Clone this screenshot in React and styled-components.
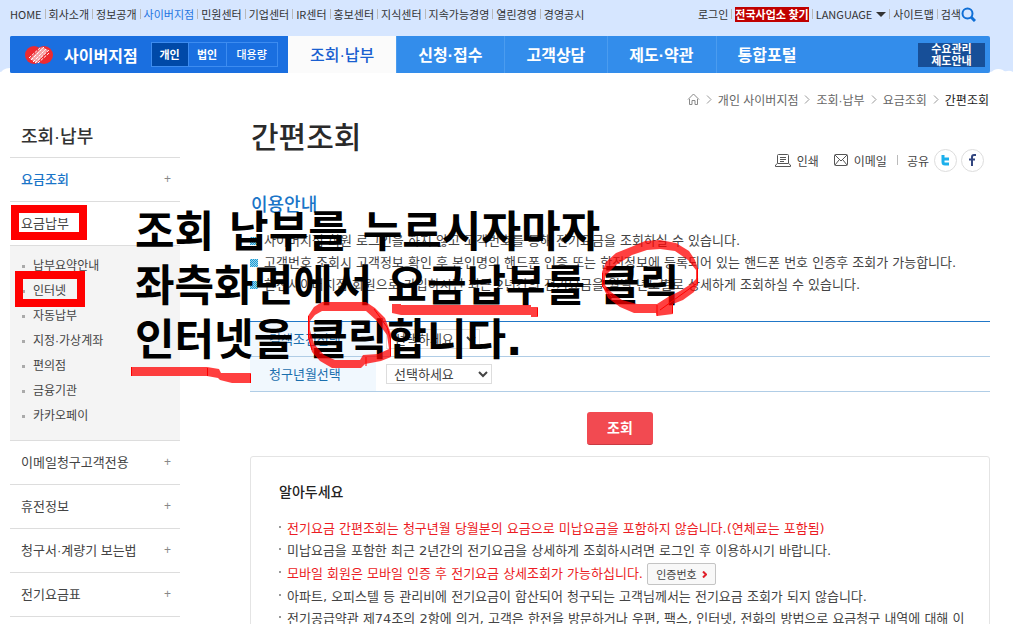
import { Fragment } from "react"
import styled, { createGlobalStyle } from "styled-components"

const topLinks = ["HOME", "회사소개", "정보공개", "사이버지점", "민원센터", "기업센터", "IR센터", "홍보센터", "지식센터", "지속가능경영", "열린경영", "경영공시"]
const menus = ["조회·납부", "신청·접수", "고객상담", "제도·약관", "통합포털"]
const payMenus = ["납부요약안내", "인터넷", "자동납부", "지정·가상계좌", "편의점", "금융기관", "카카오페이"]
const sideMenus = ["이메일청구고객전용", "휴전정보", "청구서·계량기 보는법", "전기요금표"]
const guides = [
    "사이버지점 회원 로그인을 하지 않고 고객번호를 통해 전기요금을 조회하실 수 있습니다.",
    "고객번호 조회시 고객정보 확인 후 본인명의 핸드폰 인증 또는 한전정보에 등록되어 있는 핸드폰 번호 인증후 조회가 가능합니다.",
    "한전사이버지점 회원으로 가입하시면 최근 2년간의 전기요금을 월별 년도별로 상세하게 조회하실 수 있습니다.",
]

const Logo = () => (
    <svg width="28" height="20" viewBox="0 0 28 20" aria-hidden="true">
        <ellipse cx="9" cy="10" rx="9" ry="9" fill="#ee2a30" />
        <ellipse cx="19" cy="10" rx="9" ry="9" fill="#ee2a30" />
        <path d="M5 14L17 2 23 5 12 18z" fill="#f7a3a6" />
        <g stroke="#fff" strokeWidth="1" strokeDasharray="3 1">
            <path d="M4 13L16 2M6 15L19 2M8 17L21 4M10 18L24 5M13 18L24 8" />
        </g>
    </svg>
)

const SearchIcon = () => (
    <svg width="15" height="15" viewBox="0 0 15 15" fill="none" stroke="#0f6fd6" aria-hidden="true">
        <circle cx="6.500" cy="6.500" r="5" strokeWidth="2" />
        <path d="M10 10l4 4" strokeWidth="3" />
    </svg>
)

const HomeIcon = () => (
    <svg width="13" height="12" viewBox="0 0 13 12" fill="none" stroke="#888" aria-hidden="true">
        <path d="M1 6.500L6.500 1 12 6.500M2.500 6v5.500h2.500V7.500h3v4h2.500V6" />
    </svg>
)

const Arrow = () => (
    <svg width="6" height="9" viewBox="0 0 6 9" fill="none" stroke="#999" aria-hidden="true">
        <path d="M1 0.500l4 4-4 4" />
    </svg>
)

const PrintIcon = () => (
    <svg width="16" height="13" viewBox="0 0 16 13" fill="none" stroke="#555" aria-hidden="true">
        <path d="M2.500 9V1.500Q2.500 0.500 3.500 0.500h9Q13.500 0.500 13.500 1.500V9M5 3.500h6M5 5.500h6M5 7.500h4M2.500 9.500L0.500 11v1.500h15V11L13.500 9.500z" />
    </svg>
)

const MailIcon = () => (
    <svg width="14" height="12" viewBox="0 0 14 12" fill="none" stroke="#555" aria-hidden="true">
        <rect x="0.500" y="0.500" width="13" height="11" rx="1" />
        <path d="M1 1l6 6 6-6M1 11l4-5M13 11L9 6" />
    </svg>
)

const Marks = () => (
    <MarkSvg width="720" height="400" viewBox="0 0 720 400" aria-hidden="true">
        <g fill="none" stroke="#ff0000" strokeWidth="8">
            <path d="M15 209H83V236H15z" />
            <path d="M19 275H81V303H19z" />
        </g>
        <g fill="#ff0000" fillOpacity="0.75" fillRule="evenodd">
            <path d="M602 285L602 272 606 262 616 253 631 247 645 241 660 240 676 243 689 251 695 260 698 269 698 283 694 292 683 300 673 304 673 314 657 316 656 313H634L620 307 608 298zM605 285L611 292 622 300 637 304H657L668 297 680 291 691 284 696 279 696 270 688 260 675 251 660 249 647 250 632 255 616 265 605 276z" />
            <path d="M308 316L314 307 322 302H366L375 308 385 318 391 334V357L381 361 365 364 361 368H332L320 361 312 352 308 338zM310 321V330L314 344 324 355 335 360H360L363 355 378 354 389 349 387 335 376 320 366 311H322L315 315z" />
            <path d="M392 304H401V305H531V307H538V317H531V315H401L392 313z" />
            <path d="M131 367H207L219 369 221 373H251V383H232L220 380 218 378 207 376H131z" />
        </g>
        <g fill="none" stroke="#ff0000" strokeWidth="1">
            <path d="M602.500 273V287M603 287L612 297M697.500 268V284M696 284L660 310M657 305V316M672.500 304V313" />
            <path d="M308.500 316V337L312 350M374 309L387 327 390.500 339V356M366 357V366M131.500 367V376M207.500 368V376M250.500 374V383M537.500 308V316" />
        </g>
    </MarkSvg>
)

export default function App() {
    return (
        <Page>
            <GlobalStyle />
            <Header>
                <TopBar>
                    <TopList>
                        {topLinks.map((name) => (
                            <li key={name}><TopLink href="#" $on={name === "사이버지점"}>{name}</TopLink></li>
                        ))}
                    </TopList>
                    <TopList>
                        <li><TopLink href="#">로그인</TopLink></li>
                        <li><Find href="#">전국사업소 찾기</Find></li>
                        <li><TopLink href="#">LANGUAGE <Caret /></TopLink></li>
                        <li><TopLink href="#">사이트맵</TopLink></li>
                        <li><TopLink href="#">검색<SearchIcon /></TopLink></li>
                    </TopList>
                </TopBar>
                <NavBar>
                    <Brand>
                        <Logo />
                        <BrandName href="#">사이버지점</BrandName>
                        <Kinds>
                            <Kind $on>개인</Kind>
                            <Kind>법인</Kind>
                            <Kind $small>대용량</Kind>
                        </Kinds>
                    </Brand>
                    <Menus>
                        {menus.map((name, i) => (
                            <Menu key={name} href="#" $on={i === 0}>{name}</Menu>
                        ))}
                    </Menus>
                    <Demand href="#">수요관리<br />제도안내</Demand>
                </NavBar>
                <Cloud width="10" height="5" viewBox="0 0 10 5" $side="left">
                    <path d="M0 4Q2 4 3 2 6 0 10 0V5H0z" fill="#fff" />
                </Cloud>
                <Cloud width="23" height="4" viewBox="0 0 23 4" $side="right">
                    <path d="M0 3Q2 3 4 1 8-1 13 1 14 3 17 2 20 1 23 3V4H0z" fill="#fff" />
                </Cloud>
            </Header>
            <Crumbs>
                <HomeIcon />
                {["개인 사이버지점", "조회·납부", "요금조회", "간편조회"].map((name, i) => (
                    <Fragment key={name}>
                        <Arrow />
                        <Crumb href="#" $on={i === 3}>{name}</Crumb>
                    </Fragment>
                ))}
            </Crumbs>
            <Columns>
                <Aside>
                    <SideTitle>조회·납부</SideTitle>
                    <SideItem href="#" $on>요금조회<i>+</i></SideItem>
                    <SideItem href="#">요금납부</SideItem>
                    <SubList>
                        {payMenus.map((name) => <li key={name}><a href="#">{name}</a></li>)}
                    </SubList>
                    {sideMenus.map((name) => <SideItem href="#" key={name}>{name}<i>+</i></SideItem>)}
                </Aside>
                <Main>
                    <TitleRow>
                        <h1>간편조회</h1>
                        <Tools>
                            <Tool><PrintIcon />인쇄</Tool>
                            <Tool><MailIcon />이메일</Tool>
                            <Share>공유</Share>
                            <Round aria-label="트위터">
                                <svg width="9" height="11" viewBox="0 0 9 11" fill="none" stroke="#1cb0ec" strokeWidth="3"><path d="M2 0V7Q2 9 4 9H8M2 4H8" /></svg>
                            </Round>
                            <Round aria-label="페이스북">
                                <svg width="7" height="12" viewBox="0 0 7 12" fill="none" stroke="#32457f" strokeWidth="2"><path d="M7 1H5Q3 1 3 3V12M0 5.500H6" /></svg>
                            </Round>
                        </Tools>
                    </TitleRow>
                    <Sub>이용안내</Sub>
                    <Guide>
                        {guides.map((text) => <li key={text}>{text}</li>)}
                    </Guide>
                    <Table>
                        <tbody>
                            <tr>
                                <th><label htmlFor="cond">검색조건선택</label></th>
                                <td><Select id="cond" $w="94px"><option>선택하세요</option></Select></td>
                            </tr>
                            <tr>
                                <th><label htmlFor="month">청구년월선택</label></th>
                                <td><Select id="month" $w="106px"><option>선택하세요</option></Select></td>
                            </tr>
                        </tbody>
                    </Table>
                    <Submit>조회</Submit>
                    <Notice>
                        <h3>알아두세요</h3>
                        <ul>
                            <Note $red>전기요금 간편조회는 청구년월 당월분의 요금으로 미납요금을 포함하지 않습니다.(연체료는 포함됨)</Note>
                            <Note>미납요금을 포함한 최근 2년간의 전기요금을 상세하게 조회하시려면 로그인 후 이용하시기 바랍니다.</Note>
                            <Note $red>모바일 회원은 모바일 인증 후 전기요금 상세조회가 가능하십니다.
                                <Auth>인증번호
                                    <svg width="5" height="7" viewBox="0 0 5 7" fill="none" stroke="#e0202a" strokeWidth="2"><path d="M1 0.500l3 3-3 3" /></svg>
                                </Auth>
                            </Note>
                            <Note>아파트, 오피스텔 등 관리비에 전기요금이 합산되어 청구되는 고객님께서는 전기요금 조회가 되지 않습니다.</Note>
                            <Note>전기공급약관 제74조의 2항에 의거, 고객은 한전을 방문하거나 우편, 팩스, 인터넷, 전화의 방법으로 요금청구 내역에 대해 이</Note>
                        </ul>
                    </Notice>
                </Main>
            </Columns>
            <Caption>
                조회 납부를 누르시자마자<br />
                좌측화면에서 요금납부를 클릭<br />
                인터넷을 클릭합니다.
            </Caption>
            <Marks />
        </Page>
    )
}

const GlobalStyle = createGlobalStyle`
*{
    box-sizing: border-box;
}
body{
    margin: 0;
    background-color: #fff;
    color: #444;
    font-family: "Liberation Sans", "Noto Sans CJK KR", sans-serif;
    font-size: 13px;
}
h1, h2, h3, ul{
    margin: 0;
    padding: 0;
}
ul{
    list-style: none;
}
a{
    color: inherit;
    text-decoration: none;
}
button, select{
    font-family: inherit;
    color: inherit;
}
`
const Page = styled.div`
    position: relative;
    overflow: hidden;
`
const Header = styled.header`
    position: relative;
    padding: 0 23px 0 10px;
    background-color: #d6e6ff;
`
const Cloud = styled.svg`
    position: absolute;
    bottom: 0;
    ${(p) => p.$side}: 0;
`
const TopBar = styled.div`
    display: flex;
    justify-content: space-between;
    height: 36px;
    padding: 5px 14px 0 0;
`
const TopList = styled.ul`
    display: flex;
    align-items: center;
    height: 18px;
    font-family: "Noto Sans CJK KR", sans-serif;
    font-size: 11px;
    line-height: 16px;
    white-space: nowrap;
    > li{
        display: flex;
        align-items: center;
    }
    > li + li::before{
        content: "";
        height: 10px;
        border-left: 1px solid #b9b9b9;
        margin: 0 3px;
    }
`
const TopLink = styled.a`
    display: flex;
    align-items: center;
    color: ${(p) => (p.$on ? "#1f74e0" : "#333")};
`
const Find = styled.a`
    background-color: #c00000;
    color: #fff;
    font-weight: 700;
    height: 15px;
    line-height: 15px;
`
const Caret = styled.span`
    border: 5px solid transparent;
    border-top-color: #333;
    border-bottom: 0;
    margin-left: 4px;
`
const NavBar = styled.nav`
    display: flex;
    align-items: center;
    height: 37px;
    background-color: #338deb;
    border-radius: 2px;
    padding-right: 5px;
`
const Brand = styled.div`
    display: flex;
    align-items: center;
    align-self: stretch;
    width: 278px;
    padding-left: 15px;
    background-color: #1a6fe0;
    border-radius: 2px 0 0 2px;
`
const BrandName = styled.a`
    margin: 0 13px 0 11px;
    color: #fff;
    font-size: 16px;
    font-weight: 700;
`
const Kinds = styled.div`
    display: flex;
`
const Kind = styled.button`
    width: ${(p) => (p.$small ? "51px" : "38px")};
    height: 25px;
    padding: 0;
    border: 1px solid #3d8cf0;
    border-left-width: ${(p) => (p.$on ? "1px" : "0")};
    background-color: ${(p) => (p.$on ? "#0049a8" : "transparent")};
    color: #fff;
    font-size: 11px;
    font-weight: ${(p) => (p.$small ? 500 : 700)};
    line-height: 16px;
`
const Menus = styled.div`
    display: flex;
    flex: 1;
    align-self: stretch;
`
const Menu = styled.a`
    display: flex;
    align-items: center;
    padding: 0 22px 2px;
    font-size: 16px;
    white-space: nowrap;
    font-weight: ${(p) => (p.$on ? 500 : 700)};
    color: ${(p) => (p.$on ? "#1a5fd0" : "#fff")};
    background-color: ${(p) => (p.$on ? "#fbfbfb" : "transparent")};
    & + &{
        border-left: 1px solid #4b9cef;
        padding-left: 21px;
    }
`
const Demand = styled.a`
    width: 67px;
    background-color: #174f98;
    color: #fff;
    font-size: 11px;
    font-weight: 700;
    line-height: 12px;
    text-align: center;
`
const Crumbs = styled.nav`
    display: flex;
    align-items: center;
    justify-content: flex-end;
    gap: 6px;
    height: 20px;
    margin: 16px 24px 0 10px;
    font-size: 12px;
`
const Crumb = styled.a`
    color: ${(p) => (p.$on ? "#222" : "#666")};
`
const Columns = styled.div`
    display: flex;
    gap: 70px;
    padding: 0 23px 0 10px;
`
const Aside = styled.aside`
    flex: none;
    width: 170px;
`
const SideTitle = styled.h2`
    height: 49px;
    padding: 6px 0 0 11px;
    border-bottom: 1px solid #ddd;
    color: #333;
    font-size: 18px;
    font-weight: 500;
    line-height: 44px;
`
const SideItem = styled.a`
    display: flex;
    align-items: center;
    justify-content: space-between;
    height: 44px;
    padding: 0 9px 2px 11px;
    border-bottom: 1px solid #ddd;
    color: ${(p) => (p.$on ? "#1a75c8" : "#444")};
    font-weight: ${(p) => (p.$on ? 500 : 400)};
    > i{
        color: #888;
        font-size: 12px;
        font-style: normal;
        font-weight: 400;
    }
`
const SubList = styled.ul`
    padding: 8px 0 11px 12px;
    background-color: #f4f4f4;
    border-bottom: 1px solid #ddd;
    font-size: 12px;
    line-height: 25px;
    > li{
        display: flex;
        align-items: center;
        gap: 8px;
    }
    > li::before{
        content: "";
        width: 3px;
        height: 3px;
        background-color: #aaa;
    }
`
const Main = styled.main`
    flex: 1;
    min-width: 0;
    font-family: "DejaVu Sans", "Noto Sans CJK KR", sans-serif;
`
const TitleRow = styled.div`
    display: flex;
    justify-content: space-between;
    height: 76px;
    > h1{
        color: #2a2a2a;
        font-size: 30px;
        font-weight: 500;
        line-height: 58px;
        padding-left: 1px;
    }
`
const Tools = styled.div`
    display: flex;
    align-items: center;
    height: 24px;
    margin: 39px 6px 0 0;
    font-size: 12px;
`
const Tool = styled.button`
    display: flex;
    align-items: center;
    gap: 6px;
    margin-right: 15px;
    padding: 0;
    border: 0;
    background: none;
    font-size: 12px;
    & + &{
        margin-right: 10px;
    }
`
const Share = styled.span`
    display: flex;
    align-items: center;
    margin-right: 5px;
    &::before{
        content: "";
        height: 10px;
        border-left: 1px solid #bbb;
        margin-right: 9px;
    }
`
const Round = styled.button`
    display: flex;
    align-items: center;
    justify-content: center;
    width: 23px;
    height: 23px;
    padding: 0;
    border: 1px solid #ddd;
    border-radius: 50%;
    background-color: #fff;
    & + &{
        margin-left: 4px;
    }
`
const Sub = styled.h2`
    color: #1a75c8;
    font-size: 18px;
    font-weight: 500;
    line-height: 40px;
    height: 45px;
    padding-left: 1px;
`
const Guide = styled.ul`
    margin-bottom: 25px;
    line-height: 22px;
    white-space: nowrap;
    > li{
        display: flex;
        align-items: center;
        gap: 6px;
    }
    > li::before{
        content: "";
        width: 8px;
        height: 8px;
        background: repeating-conic-gradient(#1c9fd4 0 25%, #9bd3ee 0 50%) 0 0 / 2px 2px;
    }
`
const Table = styled.table`
    width: 100%;
    border-collapse: collapse;
    border-top: 1px solid #2177c7;
    tr{
        height: 35px;
    }
    th, td{
        border-bottom: 1px solid #b0cde6;
    }
    th{
        width: 126px;
        padding: 0 0 2px 19px;
        background-color: #f1f8fe;
        color: #1a6fae;
        font-weight: 400;
        text-align: left;
    }
    td{
        padding: 0 10px;
    }
`
const Select = styled.select`
    display: block;
    width: ${(p) => p.$w};
    height: 20px;
    padding: 0 0 0 3px;
    border: 1px solid #ddd;
    background-color: #fff;
    font-size: 13px;
`
const Submit = styled.button`
    display: block;
    width: 66px;
    height: 33px;
    margin: 20px auto 11px;
    padding: 0 0 3px;
    border: 0;
    border-bottom: 1px solid #c93a42;
    border-radius: 3px;
    background-color: #f24a51;
    color: #fff;
    font-size: 14px;
    font-weight: 700;
`
const Notice = styled.section`
    padding: 23px 28px 20px;
    border: 1px solid #e4e4e4;
    border-radius: 3px;
    white-space: nowrap;
    > h3{
        color: #222;
        font-size: 14px;
        font-weight: 500;
        line-height: 24px;
        margin-bottom: 14px;
    }
`
const Note = styled.li`
    display: flex;
    align-items: center;
    min-height: 22px;
    line-height: 22px;
    color: ${(p) => (p.$red ? "#ec1c24" : "#444")};
    &::before{
        content: "";
        flex: none;
        width: 2px;
        height: 2px;
        margin: 0 6px 4px 0;
        background-color: #999;
    }
`
const Auth = styled.button`
    display: flex;
    align-items: center;
    justify-content: center;
    gap: 5px;
    width: 69px;
    height: 22px;
    margin: 1px 0 1px 4px;
    padding: 0;
    border: 1px solid #c4c4c4;
    border-radius: 2px;
    background-color: #f8f8f8;
    color: #444;
    font-size: 11px;
`
const Caption = styled.p`
    position: absolute;
    top: 205px;
    left: 135px;
    margin: 0;
    color: #000;
    font-family: "DejaVu Sans", "Noto Sans CJK KR", sans-serif;
    font-size: 43px;
    font-weight: 700;
    line-height: 54px;
    white-space: nowrap;
    pointer-events: none;
`
const MarkSvg = styled.svg`
    position: absolute;
    top: 0;
    left: 0;
    pointer-events: none;
`
